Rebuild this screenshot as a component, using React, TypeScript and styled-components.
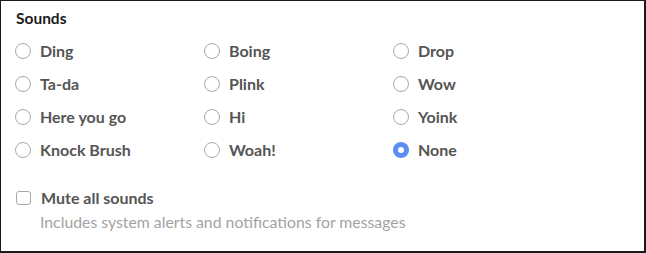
import React, { useState } from 'react';
import styled, { createGlobalStyle } from 'styled-components';

const GlobalStyle = createGlobalStyle`
  html, body {
    margin: 0;
    padding: 0;
    background: #fff;
  }
  body {
    font-family: Lato, "Noto Sans", sans-serif;
    -webkit-font-smoothing: antialiased;
  }
`;

const Panel = styled.section`
  box-sizing: border-box;
  width: 646px;
  height: 253px;
  border: 1px solid #1a1a1a;
  border-right-width: 2px;
  border-bottom-width: 2px;
  padding: 7px 0 0 14px;
  background: #fff;
`;

const Title = styled.h2`
  margin: 0 0 0 1px;
  font-size: 15.5px;
  line-height: 20px;
  font-weight: 700;
  color: #1d1c1d;
`;

const Grid = styled.div`
  display: grid;
  grid-template-columns: 189px 189px 1fr;
  grid-auto-rows: 33px;
  margin-top: 6px;
`;

const Option = styled.label`
  display: flex;
  align-items: center;
  gap: 9px;
  cursor: pointer;
`;

const RadioCircle = styled.span<{ checked: boolean }>`
  box-sizing: border-box;
  width: 16px;
  height: 16px;
  border-radius: 50%;
  flex: none;
  background: ${p => (p.checked ? '#5b8ef0' : '#fff')};
  border: ${p => (p.checked ? 'none' : '1px solid #a9a9a9')};
  display: flex;
  align-items: center;
  justify-content: center;

  &::after {
    content: '';
    display: ${p => (p.checked ? 'block' : 'none')};
    width: 6px;
    height: 6px;
    border-radius: 50%;
    background: #fff;
  }
`;

const Label = styled.span`
  font-size: 16px;
  font-weight: 700;
  color: #555;
  line-height: 20px;
`;

const MuteBlock = styled.div`
  margin-top: 22px;
`;

const CheckRow = styled.label`
  display: flex;
  align-items: center;
  gap: 10px;
  cursor: pointer;
`;

const CheckBox = styled.span`
  box-sizing: border-box;
  width: 15px;
  height: 14px;
  margin-left: 1px;
  border: 1px solid #a9a9a9;
  border-radius: 3px;
  background: #fff;
  flex: none;
`;

const Hint = styled.p`
  margin: 4px 0 0 25px;
  font-size: 15.8px;
  line-height: 20px;
  color: #a3a3a3;
`;

const sounds = [
  'Ding', 'Boing', 'Drop',
  'Ta-da', 'Plink', 'Wow',
  'Here you go', 'Hi', 'Yoink',
  'Knock Brush', 'Woah!', 'None',
];

export default function App() {
  const [selected, setSelected] = useState('None');

  return (
    <>
      <GlobalStyle />
      <Panel>
        <Title>Sounds</Title>
        <Grid>
          {sounds.map(name => (
            <Option key={name} onClick={() => setSelected(name)}>
              <RadioCircle checked={selected === name} />
              <Label>{name}</Label>
            </Option>
          ))}
        </Grid>
        <MuteBlock>
          <CheckRow>
            <CheckBox />
            <Label>Mute all sounds</Label>
          </CheckRow>
          <Hint>Includes system alerts and notifications for messages</Hint>
        </MuteBlock>
      </Panel>
    </>
  );
}
